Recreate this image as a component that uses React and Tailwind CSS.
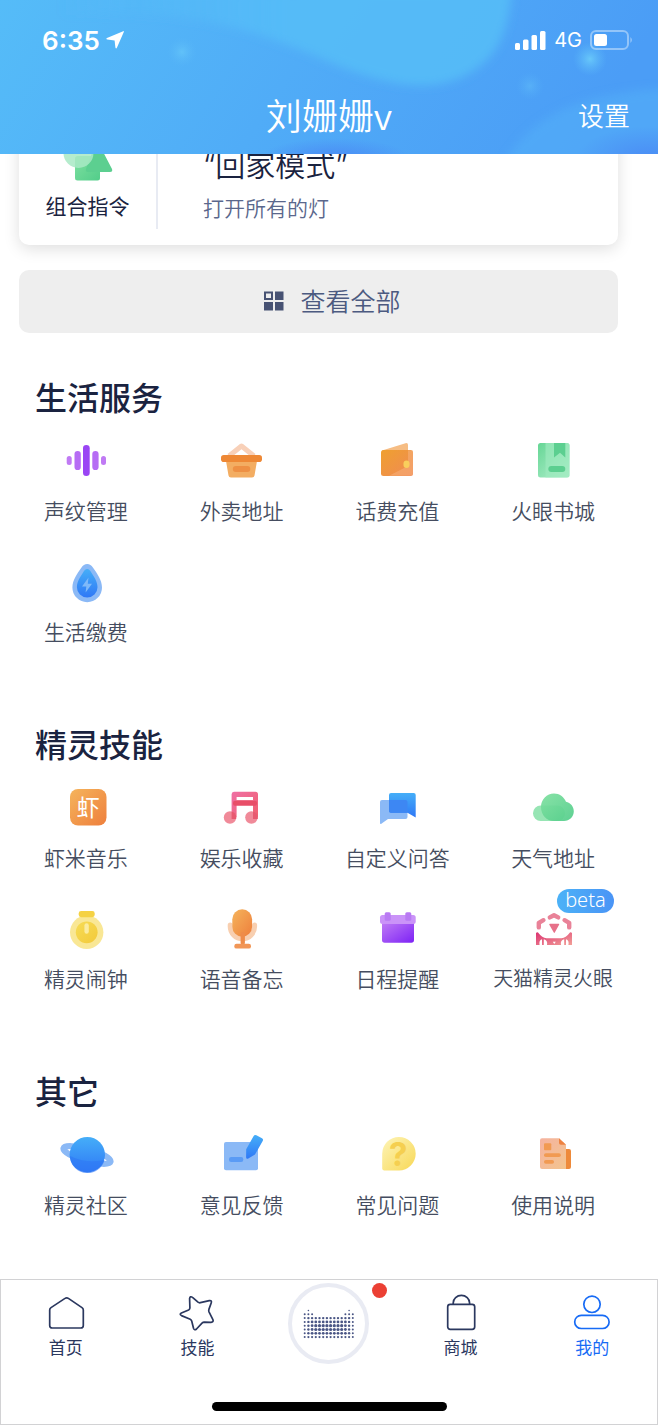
import React from "react";

function Gradients() {
  const list = [
    ["purple", "#c07cf5", "#7d22f5"],
    ["orange", "#f5b45c", "#ee7f3c"],
    ["peach", "#f5b3a0", "#f3c48d"],
    ["wallet", "#efa02f", "#f08a55"],
    ["green", "#7fe0a0", "#52cd8a"],
    ["mint", "#66d695", "#b4f0cf"],
    ["pink", "#ef6fa5", "#f0606e"],
    ["rose", "#dc3372", "#f2a097"],
    ["yellow", "#f6dc55", "#f3c93a"],
    ["lemon", "#fdf4b8", "#f8d856"],
  ];
  return (
    <svg className="absolute size-0" aria-hidden="true">
      <defs>
        {list.map(([id, from, to]) => (
          <linearGradient key={id} id={id} x1="0" y1="0" x2="1" y2="1">
            <stop offset="0" stopColor={from} />
            <stop offset="1" stopColor={to} />
          </linearGradient>
        ))}
        <linearGradient id="down" x1="0" y1="0" x2="0" y2="1">
          <stop offset="0" stopColor="#45aef8" />
          <stop offset="1" stopColor="#2f78f6" />
        </linearGradient>
      </defs>
    </svg>
  );
}

const icons = {
  voice: (
    <>
      <rect x="8.7" y="19" width="5" height="9" rx="2.5" fill="#c07af4" />
      <rect x="16.5" y="14" width="6.3" height="19" rx="3.1" fill="#b66cf4" />
      <rect x="25" y="8" width="6.7" height="31" rx="3.3" fill="#9a45f4" />
      <rect x="34.3" y="14" width="6.3" height="19" rx="3.1" fill="#b66cf4" />
      <rect x="43" y="19" width="5" height="9" rx="2.5" fill="#c07af4" />
    </>
  ),
  basket: (
    <>
      <path d="M15 19L27.5 9L40 19" fill="none" stroke="#f8d0b8" strokeWidth="5" strokeLinejoin="round" />
      <path d="M12 24H43L40.5 38.5Q40.2 40.5 38 40.5H17Q14.8 40.5 14.5 38.5Z" fill="#f3ad62" />
      <rect x="7" y="18" width="41" height="7" rx="2.8" fill="#ee8835" />
      <rect x="18.8" y="29" width="17.5" height="6" rx="3" fill="#ee9044" />
    </>
  ),
  wallet: (
    <>
      <path d="M13 13.5L36.5 6.2Q39 5.6 39 8V28L15 38Z" fill="#f6bd84" />
      <rect x="12" y="13" width="32" height="26" rx="2.5" fill="url(#wallet)" />
      <path d="M20 38.8L39 29V13.3H44V36.5Q44 38.8 41.5 38.8Z" fill="#f8b787" opacity=".45" />
      <rect x="34.5" y="23.5" width="6" height="7.5" rx="3" fill="#f9cf5c" />
    </>
  ),
  book: (
    <>
      <rect x="13" y="6" width="31.5" height="34.5" rx="2.5" fill="url(#mint)" />
      <path d="M20.5 6H42Q44.5 6 44.5 8.5V38Q44.5 40.5 42 40.5H20.5Z" fill="#9ce9be" opacity=".7" />
      <path d="M29 6H40.3V20.5L35 15.8L29 20.5Z" fill="#5ccf90" />
      <rect x="23.3" y="29" width="17" height="6" rx="3" fill="#5ccf90" />
    </>
  ),
  drop: (
    <>
      <path d="M29.2 6C31.7 6 33.4 7.5 34.9 9.5C39 15.5 44 22 44 29.4A14.8 14.8 0 0 1 14.4 29.4C14.4 22 19.4 15.5 23.5 9.5C25 7.5 26.7 6 29.2 6Z" fill="#8bb9f6" />
      <path d="M29.2 11C31 11 32 12.4 33 14C35.8 18.3 39.5 23.5 39.5 29.2A10.3 10.3 0 0 1 18.9 29.2C18.9 23.5 22.6 18.3 25.4 14C26.4 12.4 27.4 11 29.2 11Z" fill="url(#down)" />
      <path d="M30.5 19.5L24 28.6H28.3L27.6 34.5L34 25.7H29.8Z" fill="#7fb9f9" />
    </>
  ),
  xiami: (
    <>
      <rect x="12" y="5" width="36.5" height="36.5" rx="8" fill="url(#orange)" />
      <text x="30.2" y="32" textAnchor="middle" fontSize="23" fontWeight="400" fill="#fff" fontFamily="Noto Sans CJK SC, sans-serif">
        虾
      </text>
    </>
  ),
  music: (
    <>
      <path fillRule="evenodd" d="M20 7.7H41.5Q44 7.7 44 10.2V33H39V13H22.6V33H17.6V10.2Q17.6 7.7 20 7.7Z" fill="url(#pink)" />
      <rect x="22" y="16" width="17.5" height="2" fill="#ef7a92" />
      <rect x="19" y="16.7" width="24" height="5" rx="2" fill="#e84e68" />
      <circle cx="16" cy="33.5" r="6.2" fill="#f08a99" />
      <circle cx="37.4" cy="33.5" r="6.2" fill="#f08a99" />
      <path d="M17.6 27.5A6.2 6.2 0 0 1 22.2 34V35H17.6ZM39 27.5A6.2 6.2 0 0 1 43.8 34V35H39Z" fill="#e85a70" />
    </>
  ),
  chat: (
    <>
      <path d="M13 16H36.5Q38.5 16 38.5 18V33Q38.5 35 36.5 35H19L12 40Q11 40.2 11 39V18Q11 16 13 16Z" fill="#8bb9f6" />
      <path d="M22 9H44.7Q46.7 9 46.7 11V33.5L38.5 28.8H22Q20 28.8 20 26.8V11Q20 9 22 9Z" fill="url(#down)" />
      <path d="M20 16H36.5Q38.5 16 38.5 18V28.8H22Q20 28.8 20 26.8Z" fill="#3d87f3" />
    </>
  ),
  cloud: (
    <>
      <rect x="8" y="21.5" width="32" height="15.5" rx="7.7" fill="#97e5b4" />
      <path d="M29 9.5C34.5 9.5 39 12.8 41 17.8C45.5 18.8 48.8 22.6 48.8 27.3C48.8 32.7 44.5 37 39 37H29C21.5 37 16 31 16 23C16 15.5 21.8 9.5 29 9.5Z" fill="url(#green)" opacity=".93" />
    </>
  ),
  clock: (
    <>
      <circle cx="28.7" cy="27.3" r="16.7" fill="#f9e795" />
      <rect x="20.7" y="6" width="16" height="6.2" rx="2.4" fill="#f5d243" />
      <circle cx="28.7" cy="27.3" r="10.9" fill="url(#yellow)" />
      <rect x="26.4" y="18.3" width="4.4" height="10.4" rx="2.2" fill="#fbec9f" />
    </>
  ),
  mic: (
    <>
      <path d="M16.2 20V21.5A12.2 12.2 0 0 0 40.6 21.5V20" fill="none" stroke="#f8cfb0" strokeWidth="5" strokeLinecap="round" />
      <rect x="18.3" y="4.3" width="19.8" height="27.4" rx="9.9" fill="url(#orange)" />
      <rect x="26.6" y="27" width="4.3" height="13" rx="2" fill="#ee8c4a" />
      <rect x="20.3" y="38.8" width="16.7" height="4.8" rx="2.2" fill="#f19657" />
    </>
  ),
  calendar: (
    <>
      <path d="M13 17H45V35Q45 37.7 42.3 37.7H15.7Q13 37.7 13 35Z" fill="url(#purple)" />
      <rect x="11" y="10" width="35.7" height="9" rx="2.5" fill="#ca93f8" />
      <rect x="15.7" y="7.3" width="6" height="8.5" rx="1.5" fill="#b97af3" />
      <rect x="36.3" y="7.3" width="6" height="8.5" rx="1.5" fill="#b97af3" />
    </>
  ),
  fireEye: (
    <>
      <g fill="none" stroke="#e98298" strokeWidth="4.4" strokeLinejoin="round" strokeLinecap="round">
        <path d="M24.8 12.4L29 10.2L33.2 12.4" />
        <path d="M18.4 15.2L13.8 17.8V22.4" />
        <path d="M39.6 15.2L44.2 17.8V22.4" />
      </g>
      <path d="M25 18.7H33.6Q34.6 18.7 34.1 19.7L29.8 27.6Q29.3 28.5 28.8 27.6L24.3 19.7Q24 18.7 25 18.7Z" fill="#e77189" />
      <path d="M11 28Q12.5 26.4 13.7 28.2Q17 32.8 21.5 33.2H36.5Q41 32.8 44.3 28.2Q45.5 26.4 47 28V40H11Z" fill="url(#rose)" />
      <g fill="#fff">
        <path d="M14.6 40Q13.6 35.4 17 34.2V40Z" />
        <path d="M22 40Q23 35.4 18.8 34.2V40Z" />
        <path d="M36 40Q35 35.4 39.2 34.2V40Z" />
        <path d="M43.4 40Q44.4 35.4 41 34.2V40Z" />
        <path d="M27.8 36.8H30.8L29.3 39Z" />
      </g>
    </>
  ),
  planet: (
    <>
      <ellipse cx="29" cy="24" rx="24.5" ry="6" fill="none" stroke="#8bb9f6" strokeWidth="6" transform="rotate(16 29 24)" />
      <circle cx="29.3" cy="23.7" r="17.7" fill="url(#down)" />
      <path d="M12 25Q28 33 46.6 29A17.7 17.7 0 0 1 12 27Z" fill="#2f78f5" opacity=".6" />
    </>
  ),
  feedback: (
    <>
      <rect x="10" y="11" width="34" height="28.3" rx="2" fill="#8bb9f6" />
      <rect x="15" y="26" width="14.3" height="5" rx="2.2" fill="#5a9bf5" />
      <path d="M39.5 5.2Q40.6 3.4 42.4 4.3L48 7.2Q49.7 8.3 48.7 10L41 23.5L34.3 27.6Q32.2 28.5 32.1 26.3L32.2 18.3Z" fill="url(#down)" />
    </>
  ),
  question: (
    <>
      <path d="M30 6A16.7 16.7 0 1 1 30 39.4H15Q13.2 39.4 13.2 37.6V22.7A16.7 16.7 0 0 1 30 6Z" fill="url(#lemon)" />
      <text x="29.3" y="35" textAnchor="middle" fontSize="33" fontWeight="700" fill="#f5cf50" fontFamily="Inter, sans-serif">
        ?
      </text>
    </>
  ),
  manual: (
    <>
      <path d="M38 18H44Q46 18 46 20V36Q46 38 44 38H38Z" fill="#ee8a3a" />
      <path d="M17 7.3H34L41 13.8V38H17Q15 38 15 36V9.3Q15 7.3 17 7.3Z" fill="url(#peach)" />
      <path d="M34 7.3L41 13.8H36Q34 13.8 34 12Z" fill="#ee8240" />
      <rect x="19" y="12.3" width="7.3" height="7" rx="1" fill="#f19a52" />
      <rect x="19" y="22.2" width="16.8" height="3.8" rx="1.8" fill="#f19a52" />
      <rect x="19" y="29" width="10" height="3.8" rx="1.8" fill="#f19a52" />
    </>
  ),
};

const sections = [
  {
    title: "生活服务",
    items: [
      { label: "声纹管理", icon: "voice" },
      { label: "外卖地址", icon: "basket" },
      { label: "话费充值", icon: "wallet" },
      { label: "火眼书城", icon: "book" },
      { label: "生活缴费", icon: "drop" },
    ],
  },
  {
    title: "精灵技能",
    items: [
      { label: "虾米音乐", icon: "xiami" },
      { label: "娱乐收藏", icon: "music" },
      { label: "自定义问答", icon: "chat" },
      { label: "天气地址", icon: "cloud" },
      { label: "精灵闹钟", icon: "clock" },
      { label: "语音备忘", icon: "mic" },
      { label: "日程提醒", icon: "calendar" },
      { label: "天猫精灵火眼", icon: "fireEye", badge: "beta", small: true },
    ],
  },
  {
    title: "其它",
    items: [
      { label: "精灵社区", icon: "planet" },
      { label: "意见反馈", icon: "feedback" },
      { label: "常见问题", icon: "question" },
      { label: "使用说明", icon: "manual" },
    ],
  },
];

function HeaderBackground() {
  return (
    <svg
      className="absolute inset-0 w-full h-full"
      viewBox="0 0 658 154"
      preserveAspectRatio="none"
      aria-hidden="true"
    >
      <defs>
        <linearGradient id="sky" x1="0" y1="0" x2="1" y2="0.15">
          <stop offset="0" stopColor="#55bcf8" />
          <stop offset=".5" stopColor="#50acf7" />
          <stop offset="1" stopColor="#4b9df6" />
        </linearGradient>
        <linearGradient id="wave" x1="0" y1="0" x2="1" y2="0">
          <stop offset="0" stopColor="#55bdf8" stopOpacity="0" />
          <stop offset=".5" stopColor="#55bdf8" stopOpacity=".9" />
          <stop offset="1" stopColor="#55bdf8" stopOpacity=".9" />
        </linearGradient>
        <radialGradient id="glow">
          <stop offset="0" stopColor="#6bccfa" />
          <stop offset="1" stopColor="#5ab8f8" stopOpacity="0" />
        </radialGradient>
        <radialGradient id="deep">
          <stop offset="0" stopColor="#4a8bf5" />
          <stop offset="1" stopColor="#4a8bf5" stopOpacity="0" />
        </radialGradient>
        <filter id="soft">
          <feGaussianBlur stdDeviation="5" />
        </filter>
      </defs>
      <rect width="658" height="154" fill="url(#sky)" />
      <path
        d="M60 -10V16C180 6 250 28 320 58C370 80 420 95 460 78C500 60 508 30 512 -10Z"
        fill="url(#wave)"
        filter="url(#soft)"
      />
      <path
        d="M500 170C530 110 590 92 670 88V170Z"
        fill="#55b2f8"
        opacity=".5"
        filter="url(#soft)"
      />
      <ellipse cx="335" cy="158" rx="75" ry="20" fill="url(#deep)" />
      <ellipse cx="650" cy="160" rx="75" ry="34" fill="url(#deep)" />
      <circle cx="182" cy="52" r="15" fill="url(#glow)" opacity=".6" />
      <circle cx="590" cy="59" r="17" fill="url(#glow)" opacity=".9" />
      <circle cx="530" cy="86" r="14" fill="url(#glow)" opacity=".35" />
    </svg>
  );
}

function StatusBar() {
  return (
    <div className="relative flex items-center justify-between h-20 pl-[42px] pr-6 font-[Inter,sans-serif]">
      <div className="flex items-center gap-1.5">
        <span className="text-[26px] font-semibold">6:35</span>
        <svg width="18" height="20" viewBox="0 0 18 20" fill="#fff">
          <path d="M16.6 1.4Q18.2.2 17.8 2L11 17.6Q10 19.4 9.4 17.4L8.6 10.4L1.4 9.6Q-.6 9 1 8Z" />
        </svg>
      </div>
      <div className="flex items-center gap-2">
        <svg width="31" height="19" viewBox="0 0 31 19" fill="#fff">
          <rect x="0" y="12" width="5" height="7" rx="1.5" />
          <rect x="8" y="8.5" width="5.5" height="10.5" rx="1.5" />
          <rect x="16.5" y="4" width="5.5" height="15" rx="1.5" />
          <rect x="25" y="0" width="5.5" height="19" rx="1.5" />
        </svg>
        <span className="text-[20px]">4G</span>
        <svg width="44" height="20" viewBox="0 0 44 20">
          <rect x="1" y="1" width="37" height="18" rx="5" fill="none" stroke="#fff" strokeOpacity=".4" strokeWidth="2" />
          <rect x="4" y="4" width="13" height="12" rx="2.5" fill="#fff" />
          <path d="M40.5 7Q43 10 40.5 13Z" fill="#fff" opacity=".5" />
        </svg>
      </div>
    </div>
  );
}

function Header() {
  return (
    <header className="relative z-10 h-[154px] text-white">
      <HeaderBackground />
      <StatusBar />
      <div className="relative grid grid-cols-3 items-center h-[68px] px-7">
        <h1 className="col-start-2 text-center text-4xl font-[350]">刘姗姗v</h1>
        <button className="justify-self-end text-[26px] font-[350]">设置</button>
      </div>
    </header>
  );
}

function CommandCard() {
  return (
    <article className="flex -mt-12 h-[139px] pb-4 rounded-[10px] bg-white shadow-[0_4px_16px_rgba(0,0,0,0.13)]">
      <div className="flex flex-col items-center justify-end w-[139px] pb-2.5 border-r-2 border-[#e8ebf3]">
        <svg width="56" height="48" viewBox="0 0 56 48">
          <rect x="15" y="23" width="25" height="24.5" rx="2.5" fill="url(#green)" />
          <path d="M35 12Q37.5 8 39.5 12L52 36Q53 39 50 39H28Q25 39 26 36Z" fill="#5ccf90" />
          <circle cx="18.5" cy="20" r="15" fill="#a8e9c4" opacity=".85" />
        </svg>
        <span className="mt-2.5 text-[21px] leading-7 text-[#1a2340]">组合指令</span>
      </div>
      <div className="flex flex-col justify-end pl-[45px] pb-2">
        <h3 className="font-[Inter,'Noto_Sans_CJK_SC',sans-serif] text-[30px] leading-10 font-[350] text-[#1a2340]">
          “回家模式”
        </h3>
        <p className="mt-2 text-[21px] leading-7 font-[350] text-[#5a678c]">打开所有的灯</p>
      </div>
    </article>
  );
}

function ViewAll() {
  return (
    <button className="flex items-center justify-center gap-4 w-full h-[63px] mt-[25px] pl-7 pb-0.5 rounded-[10px] bg-[#eeeeee] text-[25px] font-[350] text-[#4c5a80]">
      <svg width="20" height="20" viewBox="0 0 20 20" fill="#475273">
        <path fillRule="evenodd" d="M0 .5H9V9H0ZM2 2.5V7H7V2.5Z" />
        <rect x="11" y=".5" width="8.5" height="8.5" />
        <rect x="0" y="11" width="9" height="8.5" />
        <rect x="11" y="11" width="8.5" height="8.5" />
      </svg>
      查看全部
    </button>
  );
}

function Section({ title, items }) {
  return (
    <section>
      <h2 className="pl-[35px] h-12 text-[32px] leading-[46px] font-medium text-[#1a2340]">
        {title}
      </h2>
      <div className="grid grid-cols-4 gap-y-[34px] mt-4 pl-2 pr-[27px]">
        {items.map((item) => (
          <a key={item.label} href="#" className="relative flex flex-col items-center">
            <svg width="56" height="48" viewBox="0 0 56 48" aria-hidden="true">
              {icons[item.icon]}
            </svg>
            <span
              className={
                "mt-[11px] leading-7 font-[350] whitespace-nowrap text-[#454d60] " +
                (item.small ? "text-[20px]" : "text-[21px]")
              }
            >
              {item.label}
            </span>
            {item.badge && (
              <span className="absolute left-1/2 -top-4 ml-1 px-2 h-6 rounded-full bg-gradient-to-r from-[#4cb2f7] to-[#4a94f6] font-['Noto_Sans',sans-serif] text-[20px] leading-[22px] font-light text-white">
                {item.badge}
              </span>
            )}
          </a>
        ))}
      </div>
    </section>
  );
}

// halftone speaker mark, the two outer edges rise above the middle
function Halftone() {
  const dots = [];
  for (let col = 0; col < 14; col++) {
    const edge = Math.min(col, 13 - col);
    const first = edge === 1 ? 0 : edge === 0 || edge === 2 ? 1 : 2;
    for (let row = first; row < 8; row++) {
      const r = Math.min(1 + edge * 0.2, 0.8 + row * 0.2, 1.1 + (7 - row) * 0.3, 1.6);
      dots.push(<circle key={col + "-" + row} cx={1.7 + col * 3.7} cy={1.5 + row * 3.8} r={r} />);
    }
  }
  return (
    <svg width="52" height="30" viewBox="0 0 52 30" fill="#4a5685">
      {dots}
    </svg>
  );
}

const tabIcons = {
  home: <path d="M19 5.4Q20.7 4.2 22.4 5.4L36 14.6Q37.3 15.5 37.3 17V32.5Q37.3 35 34.8 35H6.2Q3.7 35 3.7 32.5V17Q3.7 15.5 5 14.6Z" />,
  star: <path d="M15.8 4.6L21 9.2Q22 10 23.4 9.7L32.3 7.6Q35.2 7.2 34.2 10L31.9 16.4Q31.5 17.7 32 18.8L35.9 26.6Q36.9 29.2 34 29.4L27.3 29.2Q26 29.3 25 30.2L19.5 36Q17.4 37.8 16.5 35.2L14.7 28Q14.3 26.8 13.2 26.2L4.5 22.6Q2 21.3 4.4 20L11.6 17Q12.8 16.3 12.9 15L12.6 5.7Q13 2.5 15.8 4.6Z" />,
  bag: (
    <>
      <rect x="6.7" y="11.3" width="27" height="25" rx="2.5" />
      <path d="M12.2 11V10A8.2 7.6 0 0 1 28.6 10V11" />
    </>
  ),
  user: (
    <>
      <circle cx="20" cy="11.3" r="8.2" />
      <rect x="2.7" y="22.3" width="34.4" height="13.2" rx="6.6" />
    </>
  ),
};

function Tab({ icon, label, active }) {
  return (
    <a
      href="#"
      className={
        "flex flex-col items-center pt-[13px] text-[17px] leading-6 " +
        (active ? "text-[#176bf5]" : "text-[#2b385f]")
      }
    >
      <svg width="40" height="40" viewBox="0 0 40 40" fill="none" stroke="currentColor" strokeWidth="1.7" strokeLinejoin="round">
        {tabIcons[icon]}
      </svg>
      <span className="mt-0.5">{label}</span>
    </a>
  );
}

function TabBar() {
  return (
    <nav className="mt-auto h-[146px] flex flex-col justify-between border border-[#d2d2d4] bg-white">
      <div className="grid grid-cols-5 -mx-px">
        <Tab icon="home" label="首页" />
        <Tab icon="star" label="技能" />
        <div className="relative flex justify-center pt-[3px]">
          <button
            aria-label="天猫精灵"
            className="flex items-center justify-center size-[81px] rounded-full border-4 border-[#e9ebf3]"
          >
            <Halftone />
          </button>
          <span className="absolute top-[3px] left-1/2 ml-[43px] size-[15px] rounded-full bg-[#eb4034]"></span>
        </div>
        <Tab icon="bag" label="商城" />
        <Tab icon="user" label="我的" active />
      </div>
      <div className="self-center w-[235px] h-[9px] mb-[13px] rounded-full bg-black"></div>
    </nav>
  );
}

function App() {
  return (
    <div className="flex flex-col min-h-screen bg-white font-['Noto_Sans_CJK_SC',sans-serif]">
      <Gradients />
      <Header />
      <main className="pb-[60px]">
        <div className="pl-[19px] pr-10">
          <CommandCard />
          <ViewAll />
        </div>
        <div className="flex flex-col gap-[75px] mt-10">
          {sections.map((section) => (
            <Section key={section.title} {...section} />
          ))}
        </div>
      </main>
      <TabBar />
    </div>
  );
}

export default App;
